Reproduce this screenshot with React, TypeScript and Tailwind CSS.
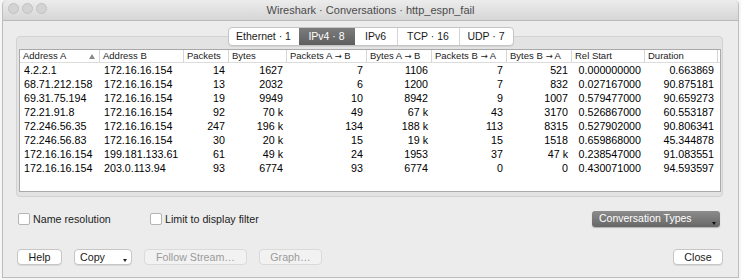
import React from 'react'

// Wireshark "Conversations" dialog (macOS, unfocused window look)

const COLS = [
  { label: 'Address A', align: 'left' },
  { label: 'Address B', align: 'left' },
  { label: 'Packets', align: 'right' },
  { label: 'Bytes', align: 'right' },
  { label: 'Packets A → B', align: 'right' },
  { label: 'Bytes A → B', align: 'right' },
  { label: 'Packets B → A', align: 'right' },
  { label: 'Bytes B → A', align: 'right' },
  { label: 'Rel Start', align: 'right' },
  { label: 'Duration', align: 'right' },
] as const

const ROWS: string[][] = [
  ['4.2.2.1', '172.16.16.154', '14', '1627', '7', '1106', '7', '521', '0.000000000', '0.663869'],
  ['68.71.212.158', '172.16.16.154', '13', '2032', '6', '1200', '7', '832', '0.027167000', '90.875181'],
  ['69.31.75.194', '172.16.16.154', '19', '9949', '10', '8942', '9', '1007', '0.579477000', '90.659273'],
  ['72.21.91.8', '172.16.16.154', '92', '70 k', '49', '67 k', '43', '3170', '0.526867000', '60.553187'],
  ['72.246.56.35', '172.16.16.154', '247', '196 k', '134', '188 k', '113', '8315', '0.527902000', '90.806341'],
  ['72.246.56.83', '172.16.16.154', '30', '20 k', '15', '19 k', '15', '1518', '0.659868000', '45.344878'],
  ['172.16.16.154', '199.181.133.61', '61', '49 k', '24', '1953', '37', '47 k', '0.238547000', '91.083551'],
  ['172.16.16.154', '203.0.113.94', '93', '6774', '93', '6774', '0', '0', '0.430071000', '94.593597'],
]

const TABS = [
  { label: 'Ethernet · 1', w: 'w-[70px]' },
  { label: 'IPv4 · 8', w: 'w-[56px]', active: true },
  { label: 'IPv6', w: 'w-[42px]' },
  { label: 'TCP · 16', w: 'w-[62px]' },
  { label: 'UDP · 7', w: 'w-[54px]' },
]

const GRID = 'grid grid-cols-[80px_84px_45px_58px_80px_65px_75px_65px_73px_73px]'

// header labels: the arrow glyph in Liberation Sans is tiny, take it from DejaVu
function HeaderLabel({ text }: { text: string }) {
  const parts = text.split('→')
  if (parts.length === 1) return <span>{text}</span>
  return (
    <span className="whitespace-pre">
      {parts[0]}
      <span className="font-['DejaVu_Sans',sans-serif] text-[8.5px]">→</span>
      {parts[1]}
    </span>
  )
}

function Checkbox({ label, className }: { label: string; className?: string }) {
  return (
    <div className={`flex items-center gap-[3px] ${className ?? ''}`}>
      <span className="h-[12px] w-[12px] rounded-[2px] border border-[#b4b4b4] bg-white" />
      <span className="text-[10.7px] text-[#1c1c1c]">{label}</span>
    </div>
  )
}

function Button({
  label,
  w,
  disabled,
  menu,
}: {
  label: string
  w: string
  disabled?: boolean
  menu?: boolean
}) {
  return (
    <div
      className={`relative flex h-[16px] items-center rounded-[4px] border text-[10.7px] ${w} ${
        menu ? 'justify-start pl-[5px]' : 'justify-center'
      } ${
        disabled
          ? 'border-[#dadada] bg-[#f2f2f2] text-[#9b9b9b]'
          : 'border-[#c6c6c6] bg-white text-[#1a1a1a] shadow-[0_1px_0_rgba(0,0,0,0.08)]'
      }`}
    >
      {label}
      {menu && (
        <span className="absolute bottom-[2px] right-[4px] h-0 w-0 border-x-[2.5px] border-t-[3px] border-x-transparent border-t-[#222]" />
      )}
    </div>
  )
}

export default function App() {
  return (
    <div className="h-[280px] w-[741px] overflow-hidden bg-[#f6f6f6] font-['Liberation_Sans',Arial,sans-serif]">
      <div className="ml-[2px] flex h-[278px] w-[737px] flex-col rounded-t-[5px] border-x border-b border-[#bdbdbd] bg-[#ececec]">
        {/* title bar */}
        <div className="relative flex h-[21px] shrink-0 items-center justify-center rounded-t-[5px] border-b border-[#b9b9b9] bg-gradient-to-b from-[#ececec] to-[#d6d6d6]">
          <div className="absolute left-[5px] top-[3px] flex gap-[3px]">
            <span className="h-[11px] w-[11px] rounded-full border border-[#c2c2c2] bg-[#d3d3d3]" />
            <span className="h-[11px] w-[11px] rounded-full border border-[#c2c2c2] bg-[#d3d3d3]" />
            <span className="h-[11px] w-[11px] rounded-full border border-[#c2c2c2] bg-[#d3d3d3]" />
          </div>
          <span className="text-[11px] text-[#4b4b4b]">Wireshark · Conversations · http_espn_fail</span>
        </div>

        {/* tabs */}
        <div className="relative z-10 mt-[6px] flex justify-center">
          <div className="flex h-[19px] overflow-hidden rounded-[4px] border border-[#c4c4c4] bg-white shadow-[0_1px_0_rgba(0,0,0,0.06)]">
            {TABS.map((t, i) => (
              <div
                key={t.label}
                className={`flex items-center justify-center text-[10.5px] ${t.w} ${
                  i > 0 && !t.active && !TABS[i - 1].active ? 'border-l border-[#d4d4d4]' : ''
                } ${
                  t.active
                    ? 'bg-gradient-to-b from-[#7c7c7c] to-[#5f5f5f] text-white'
                    : 'text-[#1a1a1a]'
                }`}
              >
                {t.label}
              </div>
            ))}
          </div>
        </div>

        {/* tab panel */}
        <div className="-mt-[10px] ml-[13px] w-[707px] rounded-[4px] border border-[#d2d2d2] bg-[#e3e3e3] px-[2px] pb-[4px] pt-[12px]">
          <div className="h-[143px] w-[702px] border border-[#a9a9a9] bg-white">
            <div className={`${GRID} h-[13px] border-b border-[#dcdcdc] text-[9.5px] text-[#222]`}>
              {COLS.map((c, i) => (
                <div
                  key={c.label}
                  className="relative flex items-center border-r border-[#d6d6d6] pl-[3px] leading-none"
                >
                  <HeaderLabel text={c.label} />
                  {i === 0 && (
                    <span className="absolute right-[4px] top-[4px] h-0 w-0 border-x-[3px] border-b-[5px] border-x-transparent border-b-[#8a8a8a]" />
                  )}
                </div>
              ))}
            </div>
            {ROWS.map((r) => (
              <div key={r[0] + r[1]} className={`${GRID} h-[14px] text-[10.7px] leading-[14px] text-black`}>
                {r.map((v, i) => (
                  <div
                    key={i}
                    className={COLS[i].align === 'left' ? 'pl-[4px]' : 'pr-[4px] text-right'}
                  >
                    {v}
                  </div>
                ))}
              </div>
            ))}
          </div>
        </div>

        {/* options row */}
        <div className="mt-[14px] flex h-[16px] items-center pr-[18px]">
          <Checkbox label="Name resolution" className="ml-[15px] w-[132px]" />
          <Checkbox label="Limit to display filter" />
          <div className="relative ml-auto flex h-[16px] w-[128px] items-center rounded-[3px] bg-gradient-to-b from-[#8c8c8c] to-[#676767] pl-[7px] text-[10.5px] text-white shadow-[0_1px_1px_rgba(0,0,0,0.25)]">
            Conversation Types
            <span className="absolute bottom-[2px] right-[4px] h-0 w-0 border-x-[2.5px] border-t-[3px] border-x-transparent border-t-[#111]" />
          </div>
        </div>

        {/* buttons row */}
        <div className="mt-[22px] flex items-center gap-[12px] pl-[14px] pr-[15px]">
          <Button label="Help" w="w-[45px]" />
          <Button label="Copy" w="w-[58px]" menu />
          <Button label="Follow Stream…" w="w-[103px]" disabled />
          <Button label="Graph…" w="w-[63px]" disabled />
          <div className="ml-auto">
            <Button label="Close" w="w-[50px]" />
          </div>
        </div>
      </div>
    </div>
  )
}
